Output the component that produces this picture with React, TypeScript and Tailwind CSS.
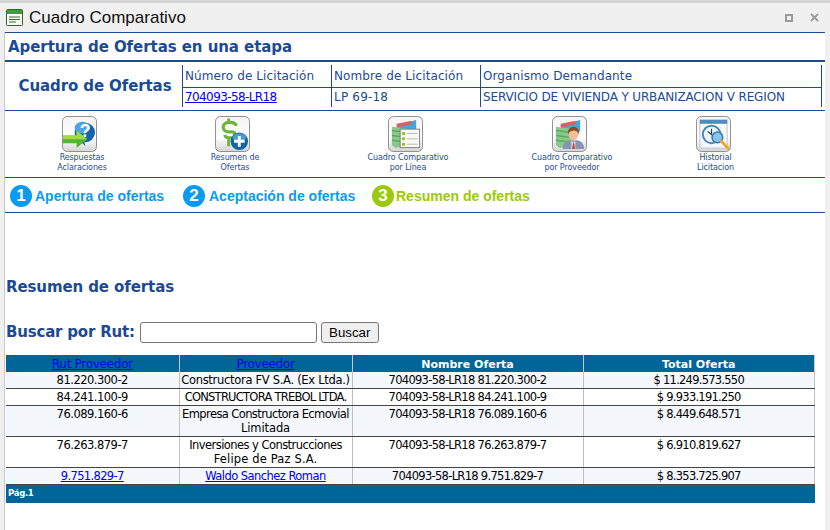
import React from "react";

const Box = ({ children }: { children: React.ReactNode }) => (
  <svg width="35" height="36" viewBox="0 0 36 37" className="mr-[5px] block">
    <defs>
      <linearGradient id="boxg" x1="0" y1="0" x2="0" y2="1">
        <stop offset="0" stopColor="#f4f4f4" />
        <stop offset="0.6" stopColor="#ffffff" />
        <stop offset="1" stopColor="#d4d4d4" />
      </linearGradient>
    </defs>
    <rect x="0.5" y="0.5" width="35" height="36" rx="5" fill="url(#boxg)" stroke="#8d8d8d" />
    {children}
  </svg>
);

const IconRespuestas = () => (
  <Box>
    <path d="M13 17a10.5 10 0 1 1 10 10l1 4-5-5a10.500 10 0 0 1-6-9z" fill="#1565ad" />
    <ellipse cx="21" cy="12" rx="8" ry="6" fill="#4fa3e0" />
    <text x="23.500" y="22" fontSize="18" fontWeight="700" fill="#fff" textAnchor="middle" fontFamily="'Liberation Sans',sans-serif">?</text>
    <path d="M1 20h14v-5l11 9-11 9v-5H1z" fill="#56b52c" />
    <path d="M1 20h14v-5l11 9H1z" fill="#9bdc4a" />
  </Box>
);

const IconResumen = () => (
  <Box>
    <path d="M22 10c-1-2.500-3-3.500-6-3.500h-2c-3 0-5.500 2-5.500 5s2.500 4.800 5.500 4.800h3c2 0 3.500 1.200 3.500 3s-1.500 3.200-3.500 3.200h-3c-2 0-3.500-1-4-3"
      fill="none" stroke="#6fb53a" strokeWidth="3.200" />
    <path d="M14 2.500v5M14 24v7" stroke="#6fb53a" strokeWidth="3" />
    <circle cx="25" cy="26" r="9" fill="#12659f" />
    <ellipse cx="25" cy="22" rx="7" ry="4" fill="#4b9ad1" />
    <path d="M25 20.500v11M19.500 26h11" stroke="#fff" strokeWidth="3" />
  </Box>
);

const Stack = () => (
  <>
    <path d="M9 9l20-5v12L9 20z" fill="#41a8d8" />
    <path d="M9 8l14-3 3 3-17 4z" fill="#d9605f" />
    <path d="M4 11l16 2v17L8 33l-4-3z" fill="#8cc88a" />
    <path d="M4 15l16 2M4 20l16 2M4 25l16 2" stroke="#5da95e" strokeWidth="1.500" />
  </>
);

const IconLinea = () => (
  <Box>
    <Stack />
    <rect x="12.500" y="13.500" width="20" height="19" fill="#f8f8f8" stroke="#7e7e7e" />
    {[18, 23.500, 29].map((y) => (
      <g key={y}>
        <circle cx="16" cy={y} r="1.800" fill="#9ec220" />
        <path d={`M19.500 ${y}h11`} stroke="#b9b9b9" />
      </g>
    ))}
  </Box>
);

const IconProveedor = () => (
  <Box>
    <Stack />
    <path d="M11 34c0-6 3-8 7-9h8c4 1 7 3 7 9z" fill="#8596b3" />
    <path d="M20 25l2 3 2-3 0 9h-4z" fill="#e8e8ee" />
    <path d="M21.500 28h1.500l.6 6h-3z" fill="#d24040" />
    <ellipse cx="22" cy="19" rx="5" ry="6" fill="#f2be9a" />
    <path d="M16.500 19c-1-6 3-8 6-8s6 3 5 8c-1-3-3-4-5-4s-5 1-6 4z" fill="#8f4a20" />
  </Box>
);

const IconHistorial = () => (
  <Box>
    <rect x="4" y="4" width="28" height="29" fill="#f5f8fb" stroke="#b9c4d0" />
    <rect x="4" y="4" width="28" height="4" fill="#4d8ac6" />
    <circle cx="16" cy="19" r="9" fill="#eef5fa" stroke="#4c86b5" strokeWidth="2" />
    <path d="M16 13v6l-4-3" fill="none" stroke="#26465f" strokeWidth="1.200" />
    <circle cx="22" cy="22" r="5.500" fill="#87c3ea" stroke="#3c78a8" strokeWidth="1.500" />
    <path d="M26 26l7 7" stroke="#e7a92e" strokeWidth="3" strokeLinecap="round" />
  </Box>
);

const tools = [
  { w: "w-[154px]", icon: <IconRespuestas />, a: "Respuestas", b: "Aclaraciones" },
  { w: "w-[152px]", icon: <IconResumen />, a: "Resumen de", b: "Ofertas" },
  { w: "w-[194px]", icon: <IconLinea />, a: "Cuadro Comparativo", b: "por Línea" },
  { w: "w-[134px]", icon: <IconProveedor />, a: "Cuadro Comparativo", b: "por Proveedor" },
  { w: "w-[153px]", icon: <IconHistorial />, a: "Historial", b: "Licitacion" },
];

const steps = [
  { n: "1", t: "Apertura de ofertas", c: "bg-[#0a9bf0]", tc: "text-[#0a9bf0]", w: "w-[173px] gap-[3px]" },
  { n: "2", t: "Aceptación de ofertas", c: "bg-[#0a9bf0]", tc: "text-[#0a9bf0]", w: "w-[189px] gap-[4px]" },
  { n: "3", t: "Resumen de ofertas", c: "bg-[#9bc90d]", tc: "text-[#9bc90d]", w: "w-[170px] gap-[2px]" },
];

const rows: { rut: string; prov: React.ReactNode; nom: string; tot: string; alt: boolean; link?: boolean }[] = [
  { rut: "81.220.300-2", prov: "Constructora FV S.A. (Ex Ltda.)", nom: "704093-58-LR18 81.220.300-2", tot: "$ 11.249.573.550", alt: true },
  { rut: "84.241.100-9", prov: <span className="tracking-[-0.75px]">CONSTRUCTORA TREBOL LTDA.</span>, nom: "704093-58-LR18 84.241.100-9", tot: "$ 9.933.191.250", alt: false },
  {
    rut: "76.089.160-6",
    prov: (
      <>
        <span className="tracking-[-0.6px]">Empresa Constructora Ecmovial</span> <span className="tracking-[-0.1px]">Limitada</span>
      </>
    ),
    nom: "704093-58-LR18 76.089.160-6",
    tot: "$ 8.449.648.571",
    alt: true,
  },
  {
    rut: "76.263.879-7",
    prov: (
      <>
        <span className="tracking-[-0.55px]">Inversiones y Construcciones</span> <span className="tracking-[0.15px]">Felipe de Paz S.A.</span>
      </>
    ),
    nom: "704093-58-LR18 76.263.879-7",
    tot: "$ 6.910.819.627",
    alt: false,
  },
  { rut: "9.751.829-7", prov: <span className="tracking-[-0.55px]">Waldo Sanchez Roman</span>, nom: "704093-58-LR18 9.751.829-7", tot: "$ 8.353.725.907", alt: true, link: true },
];

const headCell = "border-r border-[#c8c8c8] bg-[#006699] p-0 pt-px h-[17px] text-center align-middle leading-[15px]";
const cell = "border-r border-b border-r-[#c0c0c0] border-b-[#444] p-0 pt-px pb-px text-center align-top text-[11.500px] leading-[14px] text-black";
const num = "tracking-[-0.7px]";

export default function App() {
  return (
    <div className="h-[530px] w-[830px] overflow-hidden bg-[#f0f0f0] font-['DejaVu_Sans',sans-serif] tracking-[-0.3px]">
      <div className="h-[3px] bg-[#d5d5d5]" />
      <div className="flex h-[29px] items-center px-[6px]">
        <svg width="17" height="17" viewBox="0 0 17 17" className="mr-[6px] shrink-0">
          <rect x="0.500" y="0.500" width="16" height="16" rx="1" fill="#f6faf2" stroke="#3e5a3c" />
          <rect x="1" y="1" width="15" height="4" fill="#3f9b3f" />
          <path d="M3 8h11M3 10.500h11M3 13h7" stroke="#3e6a3c" />
        </svg>
        <span className="font-['Liberation_Sans',sans-serif] text-[17px] tracking-normal text-[#111]">Cuadro Comparativo</span>
        <div className="ml-auto flex items-center gap-[17px] pr-[5px]">
          <span className="block h-[8px] w-[8px] border-2 border-[#9a9a9a]" />
          <svg width="9" height="9" viewBox="0 0 9 9"><path d="M1 1l7 7M8 1l-7 7" stroke="#9a9a9a" strokeWidth="1.800" /></svg>
        </div>
      </div>
      <div className="ml-[4px] mr-[5px] h-[498px] border-l border-[#c9c9c9] bg-white">
        <div className="border-t border-[#1c4a94]">
          <h1 className="h-[29px] border-b-2 border-[#1c4a94] pl-[3px] text-[15px] leading-[28px] font-bold tracking-[-0.06px] text-[#1c4a94]">Apertura de Ofertas en una etapa</h1>
        </div>
        <div className="flex h-[49px] items-start border-b border-[#1c4a94] pt-[3px]">
          <div className="w-[177px] pt-[11px] pl-[3px] text-center text-[15px] leading-[20px] font-bold tracking-[-0.1px] text-[#1c4a94]">Cuadro de Ofertas</div>
          <table className="w-[640px] table-fixed border-collapse border-r border-[#1c4a94] text-[12px] text-[#1c4a94]">
            <colgroup>
              <col className="w-[149px]" />
              <col className="w-[149px]" />
              <col />
            </colgroup>
            <tbody>
              <tr className="h-[22px] border-b border-[#1c4a94] tracking-[0.1px]">
                <td className="border-l border-[#1c4a94] pl-[2px]">Número de Licitación</td>
                <td className="border-l border-[#1c4a94] pl-[2px]">Nombre de Licitación</td>
                <td className="border-l border-[#1c4a94] pl-[2px]">Organismo Demandante</td>
              </tr>
              <tr className="h-[20px]">
                <td className="border-l border-[#1c4a94] pl-[2px]"><a href="#" className="tracking-[-0.6px] text-[#0000ee] underline">704093-58-LR18</a></td>
                <td className="border-l border-[#1c4a94] pl-[2px] tracking-[0.2px]">LP 69-18</td>
                <td className="border-l border-[#1c4a94] pl-[2px] tracking-[-0.15px]">SERVICIO DE VIVIENDA Y URBANIZACION V REGION</td>
              </tr>
            </tbody>
          </table>
        </div>
        <div className="flex h-[67px] border-b border-[#1c4a94] pt-[5px]">
          {tools.map((t) => (
            <div key={t.b} className={`${t.w} flex flex-col items-center`}>
              {t.icon}
              <div className="mt-[1px] text-center text-[8px] leading-[10px] tracking-[-0.1px] text-[#1c4a94]">
                {t.a}
                <br />
                {t.b}
              </div>
            </div>
          ))}
        </div>
        <div className="flex h-[35px] items-center border-b border-[#1c4a94] pt-[2px] pl-[5px] font-['Liberation_Sans',sans-serif] tracking-normal">
          {steps.map((s) => (
            <div key={s.n} className={`${s.w} flex items-center`}>
              <span className={`${s.c} flex h-[22px] w-[22px] items-center justify-center rounded-full text-[17px] font-bold text-white`}>{s.n}</span>
              <span className={`${s.tc} text-[14px] font-bold`}>{s.t}</span>
            </div>
          ))}
        </div>
        <div className="pl-px">
          <h2 className="mt-[64px] text-[15px] leading-[20px] font-bold tracking-[-0.1px] text-[#1c4a94]">Resumen de ofertas</h2>
          <div className="mt-[24px] flex h-[23px] items-center">
            <span className="mr-[5px] text-[15px] font-bold tracking-[-0.2px] text-[#1c4a94]">Buscar por Rut:</span>
            <input className="h-[21px] w-[177px] rounded-[3px] border border-[#767676] bg-white" />
            <button className="ml-[4px] h-[21px] w-[58px] rounded-[3px] border border-[#767676] bg-[#efefef] font-['Liberation_Sans',sans-serif] text-[13.300px] tracking-normal text-black">Buscar</button>
          </div>
          <table className="mt-[11px] w-[809px] table-fixed border-collapse">
            <colgroup>
              <col className="w-[173px]" />
              <col className="w-[173px]" />
              <col className="w-[231px]" />
              <col />
            </colgroup>
            <thead>
              <tr>
                <th className={`${headCell} text-[12px] font-normal`}><a href="#" className="text-[#0000ee] underline">Rut Proveedor</a></th>
                <th className={`${headCell} text-[12px] font-normal`}><a href="#" className="text-[#0000ee] underline">Proveedor</a></th>
                <th className={`${headCell} text-[11px] font-bold tracking-[0px] text-white`}>Nombre Oferta</th>
                <th className={`${headCell} text-[11px] font-bold tracking-[0px] text-white`}>Total Oferta</th>
              </tr>
            </thead>
            <tbody>
              {rows.map((r) => (
                <tr key={r.rut} className={r.alt ? "bg-[#f4f7fc]" : "bg-white"}>
                  <td className={cell}>{r.link ? <a href="#" className="tracking-[-0.65px] text-[#0000ee] underline">{r.rut}</a> : <span className="tracking-[-0.5px]">{r.rut}</span>}</td>
                  <td className={cell}>{r.link ? <a href="#" className="text-[#0000ee] underline">{r.prov}</a> : r.prov}</td>
                  <td className={cell}><span className={num}>{r.nom}</span></td>
                  <td className={cell}><span className="tracking-[-0.75px]">{r.tot}</span></td>
                </tr>
              ))}
            </tbody>
          </table>
          <div className="h-[18px] w-[809px] bg-[#006699] pl-[2px] text-[8.500px] leading-[17px] font-bold tracking-[-0.3px] text-white">Pág.1</div>
        </div>
      </div>
    </div>
  );
}
